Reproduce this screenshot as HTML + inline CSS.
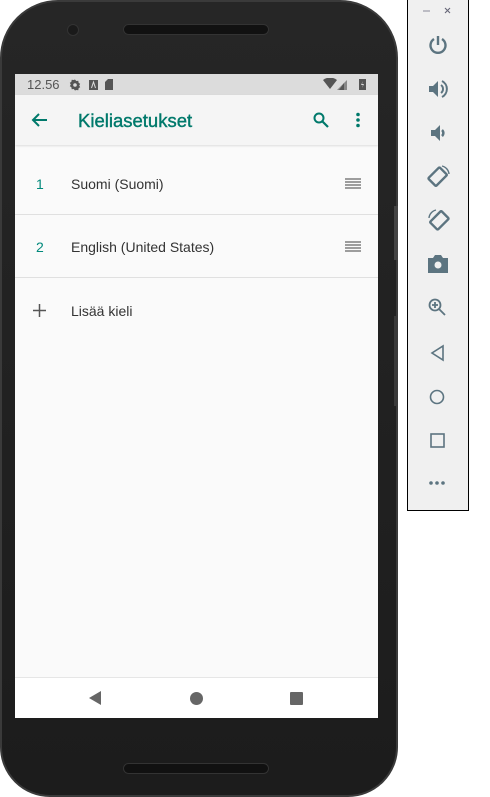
<!DOCTYPE html>
<html><head><meta charset="utf-8"><style>
*{margin:0;padding:0;box-sizing:border-box}
body{width:490px;height:797px;background:#fff;position:relative;overflow:hidden;font-family:"Liberation Sans",sans-serif}
.phone{position:absolute;left:0;top:0;width:398px;height:797px;background:linear-gradient(#262626,#1c1c1c);border-radius:58px 58px 50px 50px;border:2px solid #3a3a3a}
.btn{position:absolute;background:#444;width:4px;left:394px}
.screen{position:absolute;left:15px;top:74px;width:363px;height:644px;background:#fafafa;overflow:hidden}
.status{height:21px;background:#dcdcdc;position:relative;color:#555;font-size:13px}
.appbar{height:50px;background:#f5f5f5;position:relative;box-shadow:0 1px 2px rgba(0,0,0,.12)}
.title{position:absolute;left:63px;top:15px;font-size:18.5px;color:#00796b;font-weight:normal;-webkit-text-stroke:0.4px #00796b}
.row{position:absolute;left:0;width:363px;font-size:14px;color:#333}
.num{position:absolute;left:21px;color:#00897b}
.lbl{position:absolute;left:56px}
.div{position:absolute;left:0;width:363px;height:1px;background:#e0e0e0}
.nav{position:absolute;left:0;top:603px;width:363px;height:41px;background:#fff;border-top:1px solid #e6e6e6}
.side{position:absolute;left:407px;top:0;width:62px;height:511px;background:#f0f0f0;border:1px solid #000;border-top:none}
.side svg{position:absolute;left:19px}
</style></head><body>
<div class="phone"></div>
<div class="btn" style="top:206px;height:54px"></div>
<div class="btn" style="top:316px;height:90px;background:#3a3a3a"></div>
<div style="position:absolute;left:67px;top:24px;width:12px;height:12px;border-radius:50%;background:#1a1a1a;border:1px solid #333"></div>
<div style="position:absolute;left:123px;top:24px;width:146px;height:11px;border-radius:6px;background:#111;border:1px solid #333"></div>
<div style="position:absolute;left:123px;top:763px;width:146px;height:11px;border-radius:6px;background:#111;border:1px solid #333"></div>
<div class="screen">
 <div class="status">
  <span style="position:absolute;left:12px;top:3px">12.56</span>
  <svg style="position:absolute;left:54px;top:5px" width="60" height="12"><path d="M6 0.5l1.3 1.5 2-.3.3 2 1.6 1.2-1 1.6 1 1.6-1.6 1.2-.3 2-2-.3L6 11.5 4.7 10l-2 .3-.3-2L.8 7.1l1-1.6-1-1.6 1.6-1.2.3-2 2 .3z" fill="#555"/><circle cx="6" cy="6" r="1.8" fill="#dcdcdc"/><rect x="20" y="1" width="9" height="10" fill="#555"/><path d="M22.5 9l2-6 2 6" stroke="#dcdcdc" fill="none"/><path d="M36 3l3-3h5v11h-8z" fill="#555"/></svg>
  <svg style="position:absolute;left:308px;top:4px" width="50" height="13"><path d="M0 2Q7-3 14 2L7 11z" fill="#555"/><path d="M24 2V12H14z" fill="#888"/><path d="M21 5V12H16z" fill="#555"/><rect x="36" y="1" width="7" height="11" fill="#555"/><path d="M40 3l-2 4h2l-1 3 2-4h-2z" fill="#ddd"/></svg>
 </div>
 <div class="appbar">
  <svg style="position:absolute;left:16px;top:17px" width="16" height="16"><path d="M16 8H2M8 2L2 8l6 6" stroke="#00796b" stroke-width="2" fill="none"/></svg>
  <div class="title">Kieliasetukset</div>
  <svg style="position:absolute;left:298px;top:17px" width="16" height="16"><circle cx="6" cy="6" r="4.5" stroke="#00796b" stroke-width="2" fill="none"/><path d="M9.5 9.5L15 15" stroke="#00796b" stroke-width="2.2"/></svg>
  <svg style="position:absolute;left:340px;top:17px" width="6" height="16"><circle cx="3" cy="2.5" r="1.8" fill="#00796b"/><circle cx="3" cy="8" r="1.8" fill="#00796b"/><circle cx="3" cy="13.5" r="1.8" fill="#00796b"/></svg>
 </div>
 <div class="row" style="top:102px"><span class="num">1</span><span class="lbl">Suomi (Suomi)</span></div>
 <svg style="position:absolute;left:330px;top:104px" width="16" height="11"><path d="M0 1h16M0 4h16M0 7h16M0 10h16" stroke="#666" stroke-width="1.2"/></svg>
 <div class="div" style="top:140px"></div>
 <div class="row" style="top:165px"><span class="num">2</span><span class="lbl">English (United States)</span></div>
 <svg style="position:absolute;left:330px;top:167px" width="16" height="11"><path d="M0 1h16M0 4h16M0 7h16M0 10h16" stroke="#666" stroke-width="1.2"/></svg>
 <div class="div" style="top:203px"></div>
 <svg style="position:absolute;left:18px;top:230px" width="13" height="13"><path d="M6.5 0v13M0 6.5h13" stroke="#555" stroke-width="1.5"/></svg>
 <div class="row" style="top:229px"><span class="lbl">Lisää kieli</span></div>
 <div class="nav">
  <svg style="position:absolute;left:73px;top:12px" width="14" height="16"><path d="M13 1V15L1 8z" fill="#666"/></svg>
  <div style="position:absolute;left:175px;top:14px;width:13px;height:13px;border-radius:50%;background:#666"></div>
  <div style="position:absolute;left:275px;top:14px;width:13px;height:13px;border-radius:1px;background:#666"></div>
 </div>
</div>
<div class="side">
 <svg style="left:15px;top:6px" width="30" height="10"><path d="M0 5h7" stroke="#889" stroke-width="1"/><path d="M22 2l5 5M27 2l-5 5" stroke="#667" stroke-width="1.1"/></svg>
 <svg style="top:34px" width="22" height="22"><path d="M7 5A7.5 7.5 0 1 0 15 5" stroke="#5c7480" stroke-width="2.4" fill="none"/><path d="M11 2v9" stroke="#5c7480" stroke-width="2.4"/></svg>
 <svg style="top:78px" width="22" height="22"><path d="M2 8h4l5-5v16l-5-5H2z" fill="#5c7480"/><path d="M14 7a5 5 0 0 1 0 8M15 3a9 9 0 0 1 0 16" stroke="#5c7480" stroke-width="2" fill="none"/></svg>
 <svg style="top:122px" width="22" height="22"><path d="M4 8h4l5-5v16l-5-5H4z" fill="#5c7480"/><path d="M15 8a4 4 0 0 1 0 6" stroke="#5c7480" stroke-width="2.5" fill="none"/></svg>
 <svg style="top:165px" width="24" height="24"><rect x="5" y="4" width="11" height="16" rx="1" transform="rotate(45 11 12)" stroke="#5c7480" stroke-width="2.4" fill="none"/><path d="M15 1a9 9 0 0 1 7 8" stroke="#5c7480" stroke-width="1.4" fill="none"/></svg>
 <svg style="top:208px" width="24" height="24"><rect x="7" y="4" width="11" height="16" rx="1" transform="rotate(45 12 12)" stroke="#5c7480" stroke-width="2.4" fill="none"/><path d="M2 10a9 9 0 0 1 7 -8" stroke="#5c7480" stroke-width="1.4" fill="none"/></svg>
 <svg style="top:253px" width="22" height="22"><path d="M1 5h5l2-3h6l2 3h5v15H1z" fill="#5c7480"/><circle cx="11" cy="12" r="3.5" fill="#f0f0f0"/></svg>
 <svg style="top:297px" width="22" height="22"><circle cx="8" cy="8" r="5.5" stroke="#5c7480" stroke-width="1.8" fill="none"/><path d="M12 12l6 6M8 5v6M5 8h6" stroke="#5c7480" stroke-width="1.8"/></svg>
 <svg style="top:342px" width="22" height="22"><path d="M16 4V18L5 11z" stroke="#5c7480" stroke-width="1.6" fill="none"/></svg>
 <svg style="top:386px" width="22" height="22"><circle cx="10" cy="11" r="6.5" stroke="#5c7480" stroke-width="1.6" fill="none"/></svg>
 <svg style="top:430px" width="22" height="22"><rect x="4" y="4" width="13" height="13" stroke="#5c7480" stroke-width="1.6" fill="none"/></svg>
 <svg style="top:478px" width="22" height="10"><circle cx="4" cy="5" r="1.8" fill="#5c7480"/><circle cx="10" cy="5" r="1.8" fill="#5c7480"/><circle cx="16" cy="5" r="1.8" fill="#5c7480"/></svg>
</div>
</body></html>
